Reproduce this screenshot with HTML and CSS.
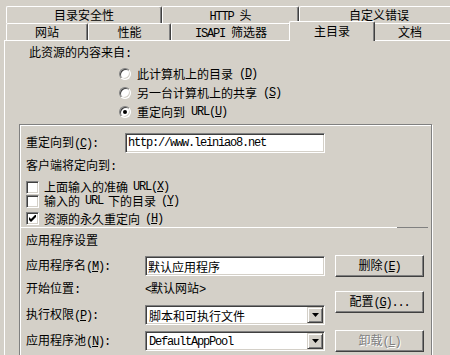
FILE: index.html
```
<!DOCTYPE html>
<html lang="zh-CN">
<head>
    <meta charset="UTF-8">
    <meta name="viewport" content="width=device-width, initial-scale=1.0">
    <title>主目录</title>

    <link rel="stylesheet" href="styles.css">
</head>
<body>
<div class="dialog">
    <!-- two rows of tabs, the front row holds the selected one -->
    <div class="tab-strip">
        <div class="tab-row">
            <div class="tab tab-security">目录安全性</div>
            <div class="tab tab-http"><span class="lat">HTTP </span>头</div>
            <div class="tab tab-errors">自定义错误</div>
        </div>
        <div class="tab-row">
            <div class="tab tab-site">网站</div>
            <div class="tab tab-perf">性能</div>
            <div class="tab tab-isapi"><span class="lat">ISAPI </span>筛选器</div>
            <div class="tab tab-home active">主目录</div>
            <div class="tab tab-docs">文档</div>
        </div>
    </div>

    <div class="panel">
        <div class="source-label">此资源的内容来自<span class="lat">:</span></div>

        <div class="radio-list">
            <div class="radio-row"><span class="radio"></span>此计算机上的目录<span class="lat">(<u>D</u>)</span></div>
            <div class="radio-row"><span class="radio"></span>另一台计算机上的共享<span class="lat">(<u>S</u>)</span></div>
            <div class="radio-row"><span class="radio checked"></span>重定向到<span class="lat"> URL(<u>U</u>)</span></div>
        </div>

        <div class="group">
            <div class="redirect-row">
                <span class="redirect-label">重定向到<span class="lat">(<u>C</u>):</span></span>
                <input class="edit edit-url" type="text" value="http://www.leiniao8.net">
            </div>

            <div class="client-label">客户端将定向到<span class="lat">:</span></div>

            <div class="check-list">
                <div class="check-row"><span class="checkbox"></span>上面输入的准确<span class="lat"> URL(<u>X</u>)</span></div>
                <div class="check-row"><span class="checkbox"></span>输入的<span class="lat"> URL </span>下的目录<span class="lat">(<u>Y</u>)</span></div>
                <div class="check-row permanent">
                    <span class="checkbox">
                        <svg width="7" height="7" viewBox="0 0 7 7"><polygon points="0,2 2,4 6,0 7,0 7,2 2,7 0,5" fill="#000"/></svg>
                    </span>资源的永久重定向<span class="lat">(<u>H</u>)</span>
                </div>
            </div>

            <div class="separator"><span class="light"></span><span class="dark"></span></div>

            <div class="app-title">应用程序设置</div>

            <div class="app-area">
                <div class="app-fields">
                    <div class="field-row row-name">
                        <span class="field-label">应用程序名<span class="lat">(<u>M</u>):</span></span>
                        <input class="edit edit-app" type="text" value="默认应用程序">
                    </div>
                    <div class="field-row row-start">
                        <span class="field-label">开始位置<span class="lat">:</span></span>
                        <span class="field-value"><span class="lat">&lt;</span>默认网站<span class="lat">&gt;</span></span>
                    </div>
                    <div class="field-row row-exec">
                        <span class="field-label">执行权限<span class="lat">(<u>P</u>):</span></span>
                        <div class="combo">
                            <span class="combo-text">脚本和可执行文件</span>
                            <span class="combo-arrow"><svg width="7" height="4" viewBox="0 0 7 4"><polygon points="0,0 7,0 3.5,4" fill="#000"/></svg></span>
                        </div>
                    </div>
                    <div class="field-row row-pool">
                        <span class="field-label">应用程序池<span class="lat">(<u>N</u>):</span></span>
                        <div class="combo">
                            <span class="combo-text lat">DefaultAppPool</span>
                            <span class="combo-arrow"><svg width="7" height="4" viewBox="0 0 7 4"><polygon points="0,0 7,0 3.5,4" fill="#000"/></svg></span>
                        </div>
                    </div>
                </div>

                <div class="app-buttons">
                    <button class="btn btn-remove" type="button">删除<span class="lat">(<u>E</u>)</span></button>
                    <button class="btn btn-config" type="button">配置<span class="lat">(<u>G</u>)...</span></button>
                    <button class="btn btn-unload" type="button" disabled>卸载<span class="lat">(<u>L</u>)</span></button>
                </div>
            </div>
        </div>
    </div>
</div>
</body>
</html>
```

FILE: styles.css
```
/* Classic Windows property sheet */
* {
    box-sizing: border-box;
}

html, body {
    margin: 0;
}

body {
    width: 450px;
    height: 355px;
    overflow: hidden;
    background: #d4d0c8;
    color: #000;
    font-family: "Noto Sans CJK SC", "Liberation Sans", sans-serif;
    font-size: 12px;
    line-height: 14px;
}

/* latin runs, narrow like the dialog font */
.lat {
    font-family: "Liberation Mono", "Noto Sans CJK SC", monospace;
    letter-spacing: -1.2px;
}

u {
    text-underline-offset: 1px;
}

.dialog {
    width: 460px;
    height: 355px;
    overflow: hidden;
    padding: 6px 0 0 4px;
}

/* Tabs */
.tab-strip {
    padding-left: 2px;
}

.tab-row {
    display: flex;
    align-items: flex-start;
    height: 17px;
}

.tab {
    height: 17px;
    flex-shrink: 0;
    background: #d4d0c8;
    border-top: 1px solid #fff;
    border-left: 1px solid #fff;
    border-right: 1px solid #404040;
    border-radius: 2px 2px 0 0;
    box-shadow: inset -1px 0 0 #808080;
    text-align: center;
    line-height: 16px;
    white-space: nowrap;
}

.tab-security { width: 156px; }
.tab-http { width: 137px; }
.tab-errors { width: 160px; }

.tab-site { width: 82px; }
.tab-perf { width: 83px; }
.tab-isapi { width: 120px; }
.tab-docs { width: 80px; padding-right: 6px; }

.tab.active {
    width: 86px;
    height: 20px;
    margin: -2px -2px 0 -2px;
    line-height: 17px;
    position: relative;
    z-index: 1;
}

/* Panel */
.panel {
    height: 315px;
    overflow: hidden;
    padding-top: 5px;
    border-top: 1px solid #fff;
    border-left: 1px solid #fff;
}

.source-label {
    margin-left: 24px;
    line-height: 12px;
}

.radio-list {
    margin: 4px 0 0 114px;
}

.radio-row {
    display: flex;
    align-items: center;
    gap: 6px;
    height: 19px;
    line-height: 12px;
}

.radio {
    width: 12px;
    height: 12px;
    display: flex;
    align-items: center;
    justify-content: center;
    background: #fff;
    border: 1px solid;
    border-color: #808080 #fff #fff #808080;
    border-radius: 50%;
    box-shadow: inset 1px 1px 0 #404040, inset -1px -1px 0 #d4d0c8;
}

.radio.checked::after {
    content: "";
    width: 4px;
    height: 4px;
    border-radius: 50%;
    background: #000;
}

/* Group frame */
.group {
    width: 413px;
    margin: 3px 0 0 14px;
    padding: 8px 0 20px 6px;
    border: 1px solid #808080;
    box-shadow: inset 1px 1px 0 #fff, 1px 1px 0 #fff;
}

.redirect-row {
    display: flex;
    align-items: center;
    height: 20px;
}

.redirect-label {
    width: 99px;
}

.edit {
    height: 20px;
    padding: 0 2px;
    background: #fff;
    border: 1px solid;
    border-color: #808080 #fff #fff #808080;
    box-shadow: inset 1px 1px 0 #404040, inset -1px -1px 0 #d4d0c8;
    font: inherit;
    color: #000;
    outline: none;
}

.edit-url {
    width: 200px;
    font-family: "Liberation Mono", monospace;
    letter-spacing: -1.2px;
}

.client-label {
    margin-top: 6px;
    line-height: 12px;
}

.check-list {
    margin-top: 7px;
}

.check-row {
    display: flex;
    align-items: center;
    gap: 5px;
    height: 14px;
    line-height: 12px;
}

.check-row.permanent {
    height: 13px;
    margin-top: 4px;
}

.checkbox {
    width: 13px;
    height: 13px;
    display: flex;
    align-items: center;
    justify-content: center;
    background: #fff;
    border: 1px solid;
    border-color: #808080 #fff #fff #808080;
    box-shadow: inset 1px 1px 0 #404040, inset -1px -1px 0 #d4d0c8;
}

.separator {
    display: flex;
    width: 408px;
    height: 1px;
    margin: 2px 0 0 -6px;
}

.separator .light {
    flex: 1;
    background: #fff;
}

.separator .dark {
    width: 31px;
    background: #808080;
}

.app-title {
    margin-top: 6px;
    line-height: 12px;
}

/* Application settings */
.app-area {
    display: flex;
    gap: 10px;
    margin-top: 9px;
}

.app-fields {
    width: 299px;
}

.field-row {
    display: flex;
    align-items: center;
    height: 20px;
}

.row-name { margin-top: 1px; }
.row-start { margin-top: 3px; }
.row-exec { margin-top: 6px; }
.row-pool { margin-top: 6px; }

.field-label {
    width: 119px;
    flex-shrink: 0;
}

.edit-app {
    width: 180px;
}

.combo {
    width: 180px;
    height: 20px;
    display: flex;
    align-items: center;
    padding: 1px 1px 1px 3px;
    background: #fff;
    border: 1px solid;
    border-color: #808080 #fff #fff #808080;
    box-shadow: inset 1px 1px 0 #404040, inset -1px -1px 0 #d4d0c8;
}

.combo-text {
    flex: 1;
    padding-top: 1px;
}

.combo-arrow {
    width: 16px;
    height: 16px;
    display: flex;
    align-items: center;
    justify-content: center;
    background: #d4d0c8;
    border: 1px solid;
    border-color: #d4d0c8 #404040 #404040 #d4d0c8;
    box-shadow: inset 1px 1px 0 #fff, inset -1px -1px 0 #808080;
}

.app-buttons {
    display: flex;
    flex-direction: column;
    width: 89px;
}

.btn {
    height: 22px;
    padding: 0;
    background: #d4d0c8;
    border: 1px solid;
    border-color: #fff #404040 #404040 #fff;
    box-shadow: inset -1px -1px 0 #808080;
    font: inherit;
    color: #000;
}

.btn-config { margin-top: 14px; }
.btn-unload { margin-top: 17px; }

.btn:disabled {
    color: #808080;
    text-shadow: 1px 1px 0 #fff;
}
```
